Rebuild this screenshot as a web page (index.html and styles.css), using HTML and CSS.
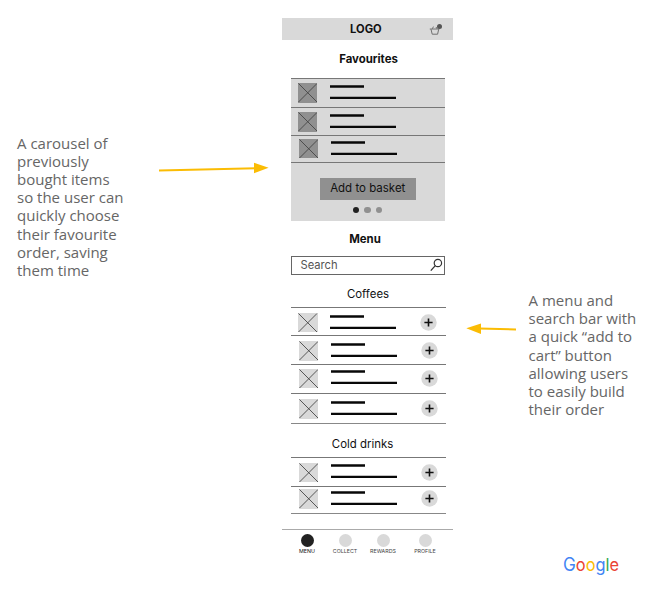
FILE: index.html
```html
<!DOCTYPE html>
<html lang="en">
<head>
<meta charset="utf-8">
<title>Ordering app wireframe</title>
<link rel="stylesheet" href="styles.css">
</head>
<body>
<svg class="defs" aria-hidden="true">
  <symbol id="thumb" viewBox="0 0 20 20"><path d="M.5.5l19 19M19.5.5l-19 19" fill="none" stroke="#444" stroke-width=".9"/></symbol>
  <symbol id="lines" viewBox="0 0 66 14"><path d="M0 1.5h34M0 12.9h66" stroke="#080808" stroke-width="2.3"/></symbol>
  <symbol id="plus" viewBox="0 0 17 17"><circle cx="8.5" cy="8.5" r="8.2" fill="#d9d9d9"/><path d="M4.4 8.5h8.2M8.5 4.4v8.2" stroke="#111" stroke-width="1.6"/></symbol>
</svg>
<main class="slide">
  <aside class="note note-left">
    <p>A carousel of<br>previously<br>bought items<br>so the user can<br>quickly choose<br>their favourite<br>order, saving<br>them time</p>
    <svg class="arrow" width="110" height="14" viewBox="0 0 110 14"><path d="M0 8.6L97 6.3" stroke="#fbbc04" stroke-width="2"/><path d="M95 .7L109.6 5.7 95 11.2z" fill="#fbbc04"/></svg>
  </aside>

  <section class="phone">
    <header class="topbar">
      <strong>LOGO</strong>
      <svg class="basket" width="14" height="13" viewBox="0 0 14 13"><path d="M.8 6h9.6M2 6.2l1.2 5h5.4l1.1-5M3.4 5.8l1-2.2M8 5.8L7 4" fill="none" stroke="#707070" stroke-width="1"/><circle cx="10.5" cy="3.6" r="2.5" fill="#555"/></svg>
    </header>
    <h1 class="title fav-title">Favourites</h1>
    <div class="carousel">
      <div class="item f1"><svg class="thumb"><use href="#thumb"/></svg><svg class="lines"><use href="#lines"/></svg></div>
      <div class="item f2"><svg class="thumb"><use href="#thumb"/></svg><svg class="lines"><use href="#lines"/></svg></div>
      <div class="item f3"><svg class="thumb"><use href="#thumb"/></svg><svg class="lines"><use href="#lines"/></svg></div>
      <div class="actions">
        <button>Add to basket</button>
        <div class="dots"><b class="on"></b><b></b><b></b></div>
      </div>
    </div>
    <h1 class="title menu-title">Menu</h1>
    <div class="search"><span>Search</span><svg width="13" height="14" viewBox="0 0 13 14"><circle cx="7.9" cy="5" r="3.7" fill="none" stroke="#333" stroke-width="1.2"/><path d="M5.3 7.6L.8 12.6" stroke="#333" stroke-width="1.3"/></svg></div>
    <h2 class="sub coffee-title">Coffees</h2>
    <div class="list">
      <div class="item c1"><svg class="thumb"><use href="#thumb"/></svg><svg class="lines"><use href="#lines"/></svg><svg class="plus"><use href="#plus"/></svg></div>
      <div class="item c2"><svg class="thumb"><use href="#thumb"/></svg><svg class="lines"><use href="#lines"/></svg><svg class="plus"><use href="#plus"/></svg></div>
      <div class="item c3"><svg class="thumb"><use href="#thumb"/></svg><svg class="lines"><use href="#lines"/></svg><svg class="plus"><use href="#plus"/></svg></div>
      <div class="item c4"><svg class="thumb"><use href="#thumb"/></svg><svg class="lines"><use href="#lines"/></svg><svg class="plus"><use href="#plus"/></svg></div>
    </div>
    <h2 class="sub cold-title">Cold drinks</h2>
    <div class="list cold">
      <div class="item d1"><svg class="thumb"><use href="#thumb"/></svg><svg class="lines"><use href="#lines"/></svg><svg class="plus"><use href="#plus"/></svg></div>
      <div class="item d2"><svg class="thumb"><use href="#thumb"/></svg><svg class="lines"><use href="#lines"/></svg><svg class="plus"><use href="#plus"/></svg></div>
    </div>
    <nav class="tabs">
      <a class="on"><b></b>MENU</a>
      <a><b></b>COLLECT</a>
      <a><b></b>REWARDS</a>
      <a><b></b>PROFILE</a>
    </nav>
  </section>

  <aside class="note note-right">
    <svg class="arrow" width="52" height="12" viewBox="0 0 52 12"><path d="M13 5.4L50 6.4" stroke="#fbbc04" stroke-width="2"/><path d="M15 .5L.3 5.3 15 11z" fill="#fbbc04"/></svg>
    <p>A menu and<br>search bar with<br>a quick “add to<br>cart” button<br>allowing users<br>to easily build<br>their order</p>
    <svg class="brand" width="60" height="24" viewBox="0 0 60 24" role="img"><text x="0" y="16.3" textLength="56" lengthAdjust="spacingAndGlyphs"><tspan class="cap" fill="#4285f4">G</tspan><tspan fill="#ea4335">o</tspan><tspan fill="#fbbc05">o</tspan><tspan fill="#4285f4">g</tspan><tspan fill="#34a853">l</tspan><tspan fill="#ea4335">e</tspan></text></svg>
  </aside>
</main>
</body>
</html>
```
FILE: styles.css
```css
* { box-sizing: border-box; }
body { margin: 0; background: #fff; }
.defs { position: absolute; width: 0; height: 0; }
.slide {
  display: grid;
  grid-template-columns: 281.5px 171px 196.5px;
  width: 649px;
  height: 592px;
  overflow: hidden;
}
svg { display: block; flex: none; }

.note {
  display: flex;
  align-items: flex-start;
  font: 15px/18.2px "Open Sans", sans-serif;
  color: #666;
}
.note p { margin: 0; white-space: nowrap; }
.note-left { padding: 133.6px 0 0 17px; }
.note-left p { width: 142px; }
.note-left .arrow { margin-top: 28.4px; }
.note-right { flex-wrap: wrap; align-content: flex-start; padding: 290.9px 0 0 13.5px; }
.note-right .arrow { margin: 32px 10.5px 0 0; }
.brand { margin: 136.7px 0 0 97px; overflow: visible; }
.brand text { font: 400 17.6px Inter, sans-serif; }
.brand .cap { font-size: 18.5px; }

.phone { padding-top: 18.4px; font-family: Inter, sans-serif; color: #111; }
.topbar {
  display: flex;
  align-items: center;
  height: 21.6px;
  padding-left: 68.5px;
  background: #d9d9d9;
  font-size: 11.2px;
  line-height: 14px;
}
.topbar strong { width: 78.5px; }
.title, .sub { margin: 0; text-align: center; line-height: 16px; }
.title { font-size: 11.4px; font-weight: 700; }
.sub { font-size: 11.4px; font-weight: 400; }
.fav-title { padding: 11px 0 0 3px; height: 38px; }
.menu-title { padding: 10px 4px 0 0; height: 35px; }
.coffee-title { padding: 11px 0 0 2px; height: 32px; }
.cold-title { padding: 12.5px 9px 0 0; height: 33px; }

.carousel { width: 154.5px; height: 143px; margin-left: 9px; background: #d9d9d9; }
.list { width: 155px; margin-left: 9px; border-bottom: 1px solid #888; }
.item { display: flex; align-items: flex-start; border-top: 1px solid #777; padding-left: 7.5px; }
.thumb { width: 19.5px; height: 19.5px; background: #d9d9d9; }
.carousel .thumb { background: #909090; }
.lines { width: 66px; height: 14px; margin: 1.7px 24px 0 12.5px; }
.plus { width: 17px; height: 17px; margin-top: 1px; }
.carousel .item { padding-left: 7px; }
.f1 { height: 29px; padding-top: 4.5px; }
.f2 { height: 28px; padding-top: 4.5px; }
.carousel .f3 { height: 27px; padding: 3px 0 0 8px; }
.actions { height: 59px; padding: 15.5px 0 0 29px; border-top: 1px solid #777; }
.actions button {
  display: block;
  width: 96.5px;
  height: 21.5px;
  padding: 0 0 2px;
  border: 0;
  background: #909090;
  color: #111;
  font: 11.5px/19px Inter, sans-serif;
}
.dots { display: flex; gap: 5px; margin: 7px 0 0 33.5px; }
.dots b { width: 6.4px; height: 6.4px; border-radius: 50%; background: #909090; }
.dots .on { background: #222; }

.search {
  display: flex;
  align-items: center;
  justify-content: space-between;
  width: 154px;
  height: 19px;
  margin-left: 9.5px;
  padding: 0 1.5px 0 8.5px;
  border: 1px solid #666;
  font-size: 11.2px;
  color: #555;
}
.c1 { height: 28.5px; padding-top: 5px; }
.c2 { height: 28.5px; padding: 5px 0 0 8px; }
.c3 { height: 29px; padding: 3.6px 0 0 8px; }
.c4 { height: 30px; padding: 5.3px 0 0 8px; }
.d1 { height: 29px; padding: 4.6px 0 0 8px; }
.d2 { height: 27.5px; padding: 2.5px 0 0 8px; }

.tabs {
  display: grid;
  grid-template-columns: 51px 25px 57px 25px;
  margin-top: 14.5px;
  padding-top: 4px;
  border-top: 1px solid #aaa;
  font-size: 5.3px;
  line-height: 7px;
  color: #444;
}
.tabs a { display: flex; flex-direction: column; align-items: center; gap: 1px; }
.tabs a:nth-child(3) { padding-right: 6px; }
.tabs a:nth-child(4) { padding-right: 4px; }
.tabs b { width: 13px; height: 13px; border-radius: 50%; background: #d9d9d9; }
.tabs .on { color: #111; }
.tabs .on b { background: #222; }
```
